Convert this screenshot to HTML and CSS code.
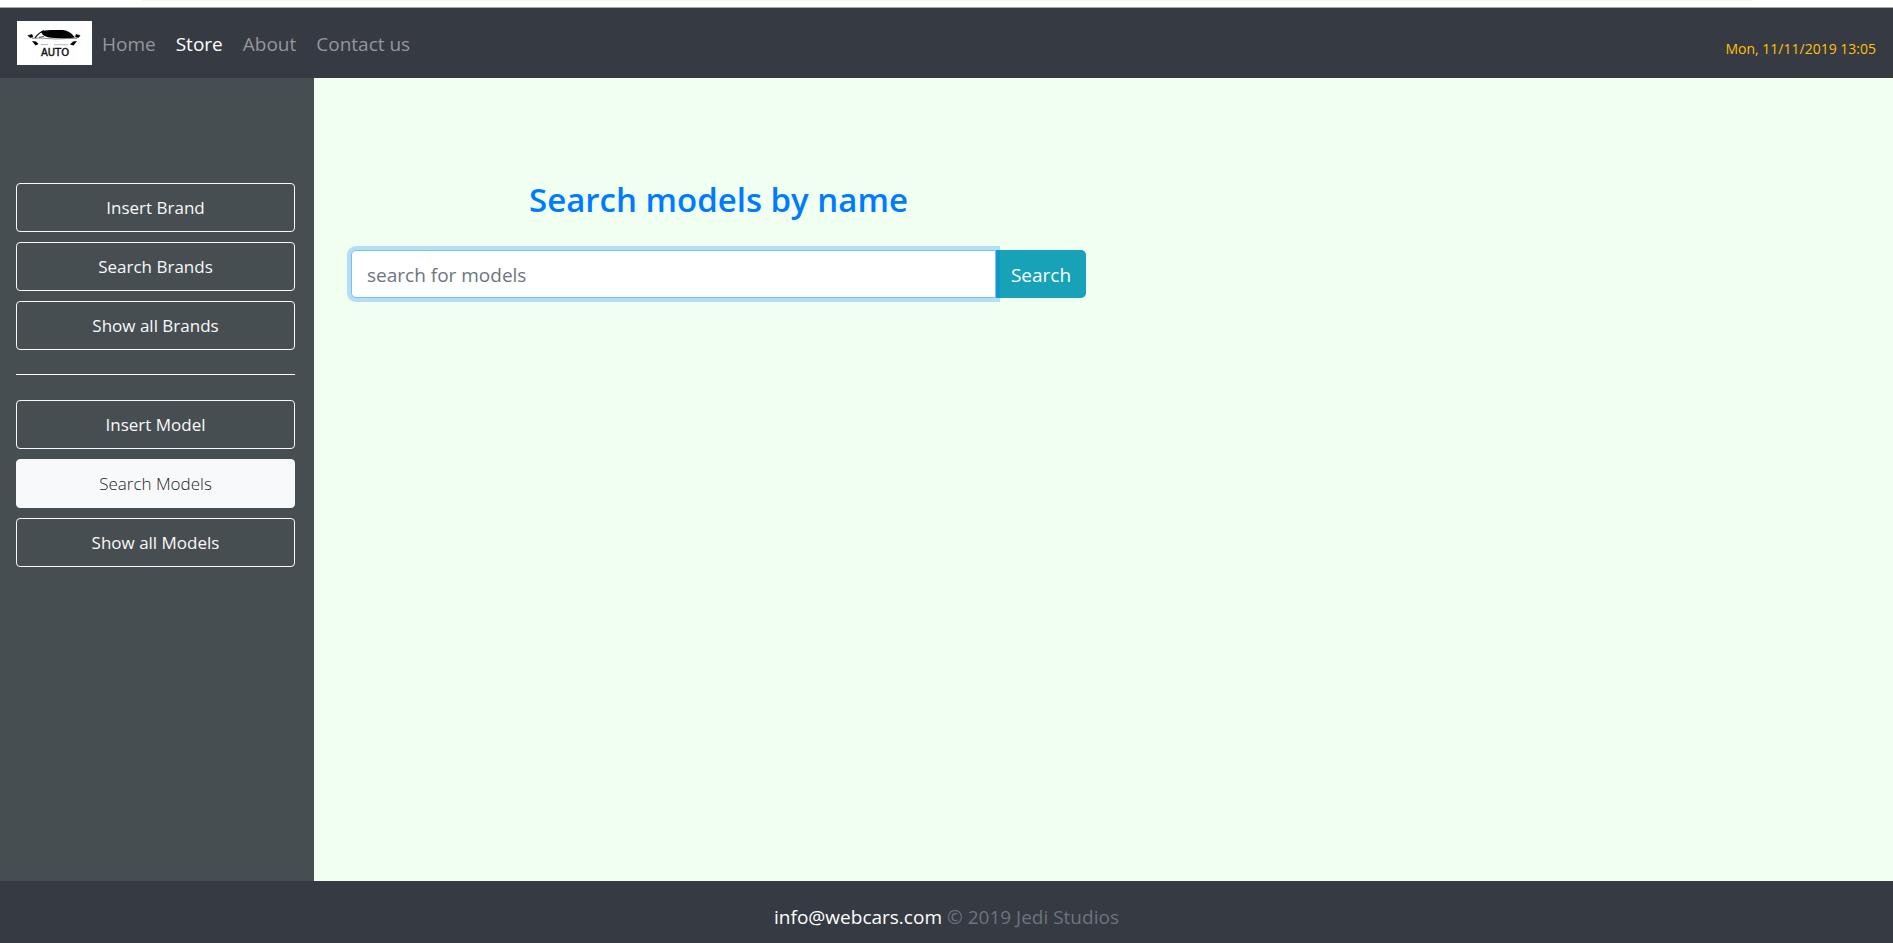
FILE: index.html
```html
<!DOCTYPE html>
<html lang="en">
<head>
<meta charset="utf-8">
<title>Search models</title>
<link rel="stylesheet" href="styles.css">
</head>
<body>
<div class="top-strip"><div class="top-strip-edge"></div></div>
<header class="navbar">
  <a class="brand" href="#" aria-label="Auto">
    <svg class="logo" viewBox="0 0 75 44" role="img" aria-hidden="true">
      <path d="M24 11 Q27 9 34 9 H46 Q53 9.500 58 16.500 Q48 18 38 17 Q30 17 26 14Z" fill="#000"/>
      <path d="M18 17 Q22 11.500 27 9.500" fill="none" stroke="#111" stroke-width="1.300"/>
      <path d="M22 16.500 L27 15.500" fill="none" stroke="#444" stroke-width="1"/>
      <path d="M11 14.500 L15 13.500 L16 16 L13 16.500Z M63 14.500 L59 13.500 L58.500 16 L61.500 16.500Z" fill="#000" stroke="#000" stroke-width="0.600"/>
      <path d="M15 17.500 Q24 16.500 29 17.500 Q40 18.500 50 17.500 L60 17.500" fill="none" stroke="#777" stroke-width="0.800"/>
      <path d="M15 20 L19 20.500 L21.500 23 L18.500 24.500Z M60 20 L56 20.500 L53 23.500 L56.500 24.500Z" fill="#000"/>
      <path d="M24 23.500 H31 M37 23.700 H51" stroke="#999" stroke-width="0.700"/>
      <text class="logo-text" x="38" y="35" text-anchor="middle">AUTO</text>
    </svg>
  </a>
  <nav class="nav">
    <a href="#">Home</a>
    <a class="active" href="#" aria-current="page">Store</a>
    <a href="#">About</a>
    <a href="#">Contact us</a>
  </nav>
  <time class="clock" datetime="2019-11-11T13:05">Mon, 11/11/2019 13:05</time>
</header>
<div class="layout">
  <aside class="sidebar">
    <div class="group">
      <button class="side-btn" type="button">Insert Brand</button>
      <button class="side-btn" type="button">Search Brands</button>
      <button class="side-btn" type="button">Show all Brands</button>
    </div>
    <hr class="divider">
    <div class="group">
      <button class="side-btn" type="button">Insert Model</button>
      <button class="side-btn selected" type="button">Search Models</button>
      <button class="side-btn" type="button">Show all Models</button>
    </div>
  </aside>
  <main class="content">
    <div class="panel">
      <h1 class="title">Search models by name</h1>
      <form class="search">
        <input class="search-input" type="text" placeholder="search for models" aria-label="Search for models">
        <button class="search-btn" type="button">Search</button>
      </form>
    </div>
  </main>
</div>
<footer class="footer"><a href="#">info@webcars.com</a> © 2019 Jedi Studios</footer>
</body>
</html>
```
FILE: styles.css
```css
* {
  box-sizing: border-box;
}

body {
  margin: 0;
  min-height: 100vh;
  display: flex;
  flex-direction: column;
  background: #f0fff0;
  font-family: "Segoe UI", "Open Sans", "Noto Sans", sans-serif;
  font-size: 19px;
  line-height: 30px;
}

a {
  color: inherit;
  text-decoration: none;
}

button,
input {
  font: inherit;
}

.top-strip {
  height: 8px;
  background: #fff;
  border-bottom: 1px solid #a6a7a9;
}

.top-strip-edge {
  height: 1px;
  margin: 0 142px;
  background: #f1f3f4;
}

.navbar {
  display: flex;
  align-items: center;
  gap: 10px;
  padding: 13px 17px;
  background: #363a42;
}

.logo {
  display: block;
  width: 75px;
  height: 44px;
  background: #fff;
}

.logo-text {
  font: 10px "DejaVu Sans", sans-serif;
  fill: #111;
  stroke: #111;
  stroke-width: 0.4px;
}

.nav {
  display: flex;
  gap: 20px;
  padding-top: 2px;
  color: #94979b;
}

.nav .active {
  color: #fff;
}

.clock {
  margin-left: auto;
  padding-top: 12px;
  font-size: 14px;
  color: #ffc107;
}

.layout {
  flex: 1;
  display: flex;
}

.sidebar {
  flex: 0 0 314px;
  padding: 105px 19px 20px 16px;
  background: #474e51;
}

.group {
  display: flex;
  flex-direction: column;
  gap: 10px;
}

.side-btn {
  height: 49px;
  padding: 0;
  border: 1px solid #f8f9fa;
  border-radius: 4px;
  background: transparent;
  color: #f8f9fa;
  font-size: 17px;
}

.side-btn.selected {
  background: #f8f9fa;
  color: #212529;
  font-weight: 300;
}

.divider {
  margin: 24px 0 25px;
  border: 0;
  border-top: 1px solid #fff;
}

.content {
  flex: 1;
  padding: 101px 37px 20px;
}

.panel {
  max-width: 735px;
}

.title {
  margin: 0 0 29px;
  color: #007bff;
  font-size: 33px;
  font-weight: 600;
  line-height: 42px;
  text-align: center;
}

.search {
  display: flex;
}

.search-input {
  position: relative;
  z-index: 1;
  flex: 1;
  min-width: 0;
  height: 48px;
  padding: 2px 15px 0;
  border: 1px solid #80bdff;
  border-radius: 5px 0 0 5px;
  background: #fff;
  color: #495057;
  outline: 0;
  box-shadow: 0 0 0 4px rgba(0, 123, 255, 0.25);
}

.search-input::placeholder {
  color: #6c757d;
  opacity: 1;
}

.search-btn {
  width: 90px;
  height: 48px;
  padding: 2px 0 0;
  border: 0;
  border-radius: 0 5px 5px 0;
  background: #17a2b8;
  color: #fff;
}

.footer {
  padding: 21px 16px 11px;
  background: #363a42;
  color: #6c757d;
  text-align: center;
}

.footer a {
  color: #fff;
}
```
